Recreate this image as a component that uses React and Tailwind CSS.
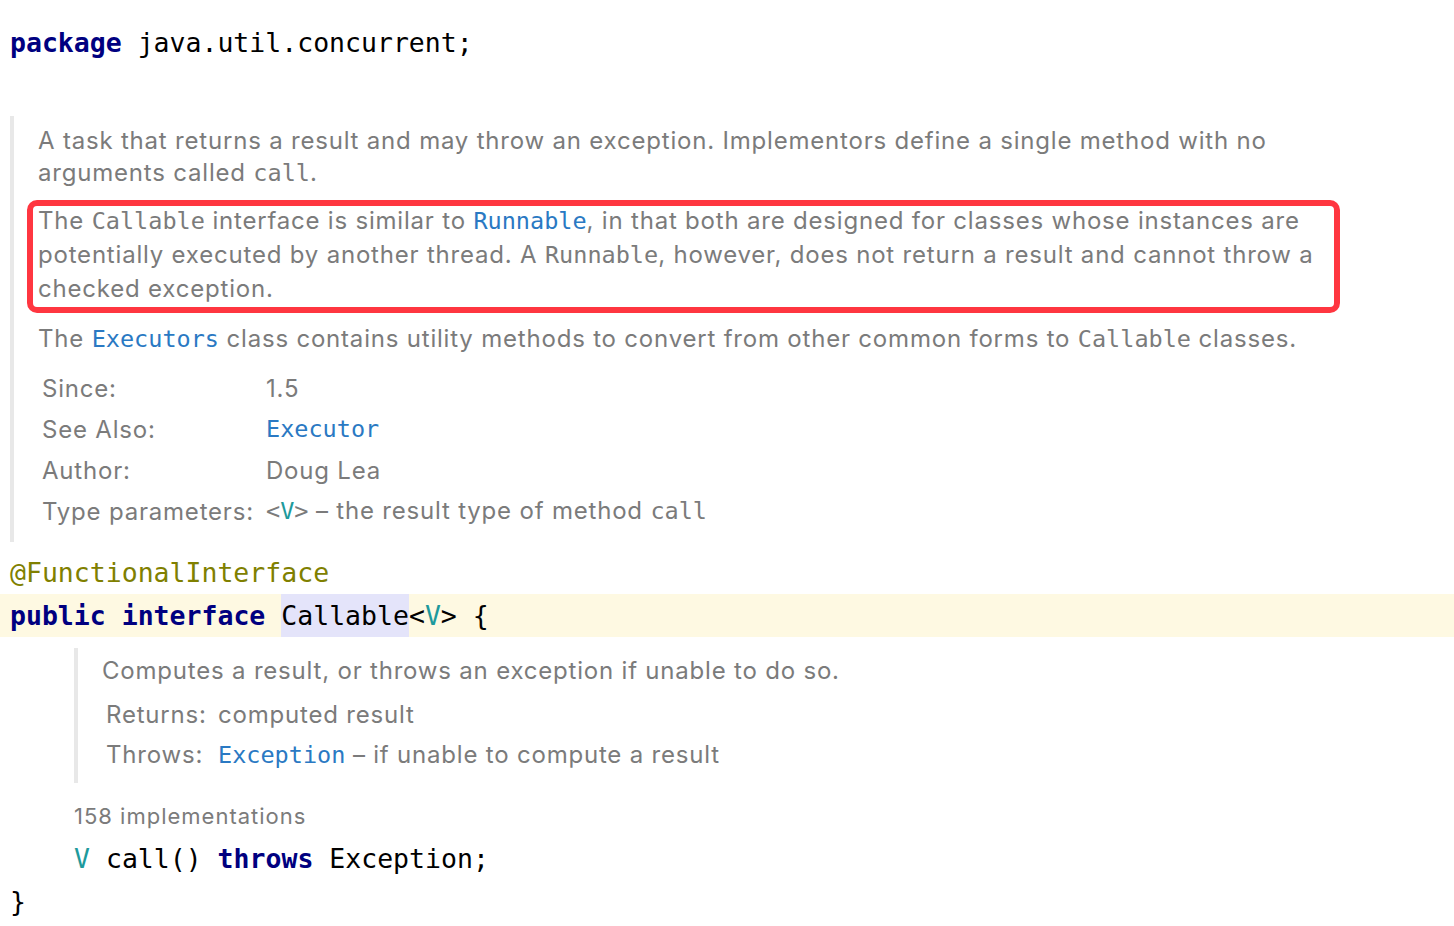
const mono = "font-['DejaVu_Sans_Mono','Liberation_Mono',monospace]";
const sans = "font-['Inter','Noto_Sans',sans-serif]";

const Kw = ({ children }) => <span className="font-bold text-[#000080]">{children}</span>;
const Tp = ({ children }) => <span className="text-[#1e9a9c]">{children}</span>;
const Code = ({ children }) => (
  <span className={`${mono} text-[23.5px] tracking-normal`}>{children}</span>
);
const Link = ({ children }) => (
  <span className={`${mono} text-[23.5px] tracking-normal text-[#2a79c3]`}>{children}</span>
);

const TagRow = ({ label, width, children }) => (
  <div className="flex h-[41px] items-center">
    <div className={`${width} shrink-0`}>{label}</div>
    <div>{children}</div>
  </div>
);

const App = () => {
  return (
    <div className={`w-[1454px] h-[926px] overflow-hidden bg-white ${mono} text-[26.5px] text-black`}>

      {/* package */}
      <div className="pt-[21px] pl-[10px] h-[65px] leading-[44px]">
        <Kw>package</Kw> java.util.concurrent;
      </div>

      {/* class javadoc */}
      <div className={`mt-[51px] ml-[10px] border-l-4 border-[#e8e8e8] pl-[24px] pt-[9px] pb-[10px] ${sans} text-[24px] tracking-[0.8px] text-[#7b7b7b]`}>
        <div className="w-[1296px]">
          <p className="leading-[32px]">
            A task that returns a result and may throw an exception. Implementors define a single method with no arguments called <Code>call</Code>.
          </p>

          <div className="relative mt-[15px]">
            <p className="leading-[34px]">
              The <Code>Callable</Code> interface is similar to <Link>Runnable</Link>, in that both are designed for classes whose instances are potentially executed by another thread. A <Code>Runnable</Code>, however, does not return a result and cannot throw a checked exception.
            </p>
            <div className="absolute left-[-11px] top-[-4px] w-[1313px] h-[113px] rounded-[10px] border-[6px] border-[#ff3640] pointer-events-none"></div>
          </div>

          <p className="mt-[16px] leading-[34px]">
            The <Link>Executors</Link> class contains utility methods to convert from other common forms to <Code>Callable</Code> classes.
          </p>
        </div>

        <div className="mt-[12px] pl-[4px]">
          <TagRow label="Since:" width="w-[224px]">1.5</TagRow>
          <TagRow label="See Also:" width="w-[224px]"><Link>Executor</Link></TagRow>
          <TagRow label="Author:" width="w-[224px]">Doug Lea</TagRow>
          <TagRow label="Type parameters:" width="w-[224px]">
            <span className={`${mono} text-[23.5px] tracking-normal`}>&lt;<span className="text-[#1e9a9c]">V</span>&gt;</span> – the result type of method <Code>call</Code>
          </TagRow>
        </div>
      </div>

      {/* annotation */}
      <div className="mt-[9px] pl-[10px] h-[43px] leading-[43px] text-[#808000]">@FunctionalInterface</div>

      {/* declaration, caret line */}
      <div className="pl-[10px] h-[43px] leading-[43px] bg-[#fef9e2] flex">
        <span className="whitespace-pre"><Kw>public</Kw> <Kw>interface</Kw> </span>
        <span className="bg-[#e4e4fa]">Callable</span>
        <span className="whitespace-pre">&lt;<Tp>V</Tp>&gt; {"{"}</span>
      </div>

      {/* method javadoc */}
      <div className={`mt-[11px] ml-[74px] h-[135px] border-l-4 border-[#e8e8e8] pl-[24px] pt-[7px] ${sans} text-[24px] tracking-[0.8px] text-[#7b7b7b]`}>
        <p className="leading-[32px]">Computes a result, or throws an exception if unable to do so.</p>
        <div className="mt-[7px] pl-[4px]">
          <div className="flex h-[42px] items-center">
            <div className="w-[112px] shrink-0">Returns:</div>
            <div>computed result</div>
          </div>
          <div className="flex h-[38px] items-center">
            <div className="w-[112px] shrink-0">Throws:</div>
            <div><Link>Exception</Link> – if unable to compute a result</div>
          </div>
        </div>
      </div>

      {/* inlay hint */}
      <div className={`mt-[18px] pl-[74px] h-[30px] leading-[30px] ${sans} text-[22px] tracking-[1px] text-[#7b7b7b]`}>158 implementations</div>

      {/* method */}
      <div className="mt-[6px] pl-[74px] h-[43px] leading-[43px] whitespace-pre">
        <Tp>V</Tp> call() <Kw>throws</Kw> Exception;
      </div>
      <div className="pl-[10px] h-[44px] leading-[44px]">{"}"}</div>
    </div>
  );
};

export default App;
